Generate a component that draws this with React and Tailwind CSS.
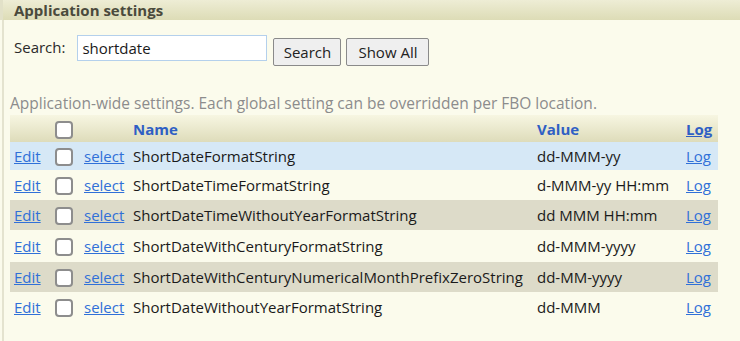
import React from "react";

const rows = [
  { name: "ShortDateFormatString", value: "dd-MMM-yy", bg: "bg-[#d6e8f6]", h: "h-[28px]" },
  { name: "ShortDateTimeFormatString", value: "d-MMM-yy HH:mm", bg: "", h: "h-[30px]" },
  { name: "ShortDateTimeWithoutYearFormatString", value: "dd MMM HH:mm", bg: "bg-[#dddbc9]", h: "h-[30px]" },
  { name: "ShortDateWithCenturyFormatString", value: "dd-MMM-yyyy", bg: "", h: "h-[32px]" },
  { name: "ShortDateWithCenturyNumericalMonthPrefixZeroString", value: "dd-MM-yyyy", bg: "bg-[#dddbc9]", h: "h-[30px]" },
  { name: "ShortDateWithoutYearFormatString", value: "dd-MMM", bg: "", h: "h-[30px]" },
];

function Box() {
  return (
    <span className="inline-block w-[18px] h-[18px] rounded-[4px] border-2 border-[#8d8d8d] bg-white align-middle" />
  );
}

export default function App() {
  return (
    <div
      className="w-[740px] h-[341px] bg-[#fbfbec] text-[15px] leading-[20px] text-[#1a1a1a] overflow-hidden"
      style={{ fontFamily: '"Open Sans", "Liberation Sans", sans-serif' }}
    >
      <div className="h-[20px] bg-gradient-to-b from-[#eeedd5] to-[#dddcb6] pl-[11px] flex items-center font-bold text-[15px] text-[#4a4a3c] border-l-[3px] border-[#e2e1c8]">
        Application settings
      </div>
      <div className="border-l-[2px] border-[#e4e3cf] ml-[2px] h-[321px]">
        <div className="flex items-start pt-[15px] pl-[10px]">
          <span className="mt-[2px] text-[#2a2a2a]">Search:</span>
          <div className="ml-[12px] w-[190px] h-[26px] border border-[#b4d0ec] bg-white flex items-center pl-[4px]">
            shortdate
          </div>
          <button className="ml-[6px] mt-[3px] w-[68px] h-[28px] border border-[#8a8a8a] rounded-[2px] bg-[#efefef] text-[#222]">
            Search
          </button>
          <button className="ml-[5px] mt-[3px] w-[83px] h-[28px] border border-[#8a8a8a] rounded-[2px] bg-[#efefef] text-[#222]">
            Show All
          </button>
        </div>
        <div className="mt-[27px] pl-[6px] text-[#8c8c8c] text-[15.5px] leading-[20px] whitespace-nowrap">
          Application-wide settings. Each global setting can be overridden per FBO location.
        </div>
        <div className="mt-[2px] ml-[6px] w-[708px]">
          <div className="h-[27px] flex items-center bg-gradient-to-b from-[#f7f6e2] to-[#dedcba]">
            <div className="w-[45px]" />
            <div className="w-[78px]"><Box /></div>
            <div className="w-[404px] font-bold text-[#2f5fc4]">Name</div>
            <div className="w-[149px] font-bold text-[#2f5fc4]">Value</div>
            <div className="font-bold text-[#2f5fc4] underline">Log</div>
          </div>
          {rows.map((r) => (
            <div key={r.name} className={`${r.h} flex items-center ${r.bg}`}>
              <div className="w-[45px] pl-[4px] text-[#3070d8] underline">Edit</div>
              <div className="w-[29px]"><Box /></div>
              <div className="w-[49px] text-[#3070d8] underline">select</div>
              <div className="w-[404px] whitespace-nowrap">{r.name}</div>
              <div className="w-[149px] whitespace-nowrap">{r.value}</div>
              <div className="text-[#3070d8] underline">Log</div>
            </div>
          ))}
        </div>
      </div>
    </div>
  );
}
